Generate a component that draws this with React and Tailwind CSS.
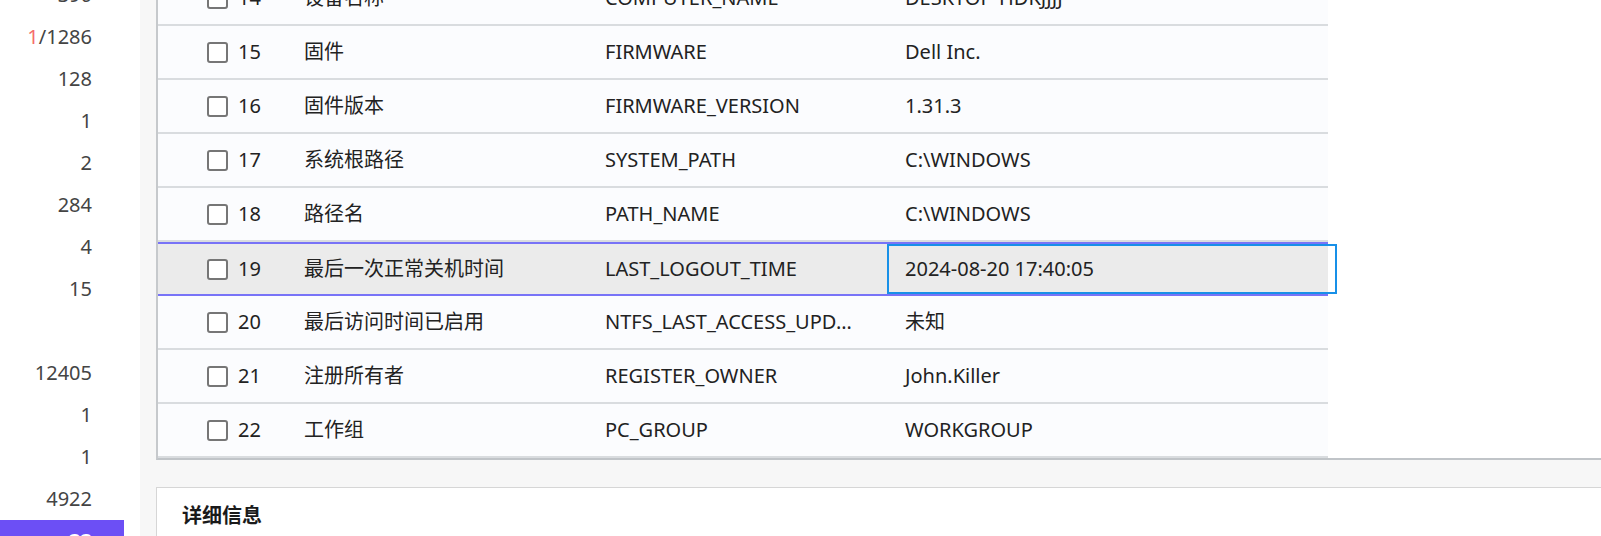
const sideItems = [
  { v: '390' },
  { v: '1286', red: '1' },
  { v: '128' },
  { v: '1' },
  { v: '2' },
  { v: '284' },
  { v: '4' },
  { v: '15' },
  { v: '' },
  { v: '12405' },
  { v: '1' },
  { v: '1' },
  { v: '4922' },
];

const rows = [
  { no: 14, name: '设备名称', key: 'COMPUTER_NAME', value: 'DESKTOP-HDKJJJJ' },
  { no: 15, name: '固件', key: 'FIRMWARE', value: 'Dell Inc.' },
  { no: 16, name: '固件版本', key: 'FIRMWARE_VERSION', value: '1.31.3' },
  { no: 17, name: '系统根路径', key: 'SYSTEM_PATH', value: 'C:\\WINDOWS' },
  { no: 18, name: '路径名', key: 'PATH_NAME', value: 'C:\\WINDOWS' },
  { no: 19, name: '最后一次正常关机时间', key: 'LAST_LOGOUT_TIME', value: '2024-08-20 17:40:05', selected: true },
  { no: 20, name: '最后访问时间已启用', key: 'NTFS_LAST_ACCESS_UPDATE', value: '未知' },
  { no: 21, name: '注册所有者', key: 'REGISTER_OWNER', value: 'John.Killer' },
  { no: 22, name: '工作组', key: 'PC_GROUP', value: 'WORKGROUP' },
];

const Checkbox = () => (
  <span className="w-[21px] h-[21px] shrink-0 border-2 border-[#767676] rounded-[3px] bg-white" />
);

const Row = ({ row }) => {
  const base = row.selected
    ? 'bg-[#ebebeb] border-y-2 border-[#7873f7] shadow-[0_2px_0_#d9dcdf]'
    : 'bg-[#fbfcfe] border-b-2 border-[#d9dcdf]';
  return (
    <div className={`h-[54px] w-[1170px] grid grid-cols-[146px_301px_282px_441px] items-center text-[20px] text-[#222] ${base}`}>
      <div className="flex items-center pl-[49px] gap-[10px]">
        <Checkbox />
        <span>{row.no}</span>
      </div>
      <div className="whitespace-nowrap">{row.name}</div>
      <div className="whitespace-nowrap overflow-hidden text-ellipsis pr-[24px]">{row.key}</div>
      {row.selected ? (
        <div className="w-[450px] self-stretch border-2 border-[#1890e8] flex items-center pl-[16px]">
          {row.value}
        </div>
      ) : (
        <div className="pl-[18px] whitespace-nowrap">{row.value}</div>
      )}
    </div>
  );
};

export default function App() {
  return (
    <div
      className="w-[1601px] h-[536px] overflow-hidden flex bg-white"
      style={{ fontFamily: '"Noto Sans", "Noto Sans CJK SC", sans-serif' }}
    >
      <aside className="w-[140px] shrink-0 bg-white flex flex-col mt-[-26px]">
        {sideItems.map((it, i) => (
          <div key={i} className="h-[42px] shrink-0 flex items-center justify-end pr-[48px] text-[20px] text-[#444]">
            {it.red && <span className="text-[#f56c6c]">{it.red}</span>}
            {it.red ? '/' : ''}
            {it.v}
          </div>
        ))}
        <div className="h-[42px] w-[124px] shrink-0 bg-[#6c4ff5] flex items-center justify-end pr-[32px] text-[20px] text-white font-bold">
          33
        </div>
      </aside>

      <main className="flex-1 bg-[#f7f7f7] pl-[16px] flex flex-col">
        <section className="bg-white border-l-2 border-b-2 border-l-[#c6c9cc] border-b-[#c0c4c8]">
          <div className="flex flex-col mt-[-28px]">
            {rows.map((r) => (
              <Row key={r.no} row={r} />
            ))}
          </div>
        </section>

        <section className="mt-[27px] flex-1 bg-white border-t border-l border-[#d6d6d6] pl-[25px] pt-[13px]">
          <h3 className="text-[20px] font-bold text-[#1a1a1a]">详细信息</h3>
        </section>
      </main>
    </div>
  );
}
